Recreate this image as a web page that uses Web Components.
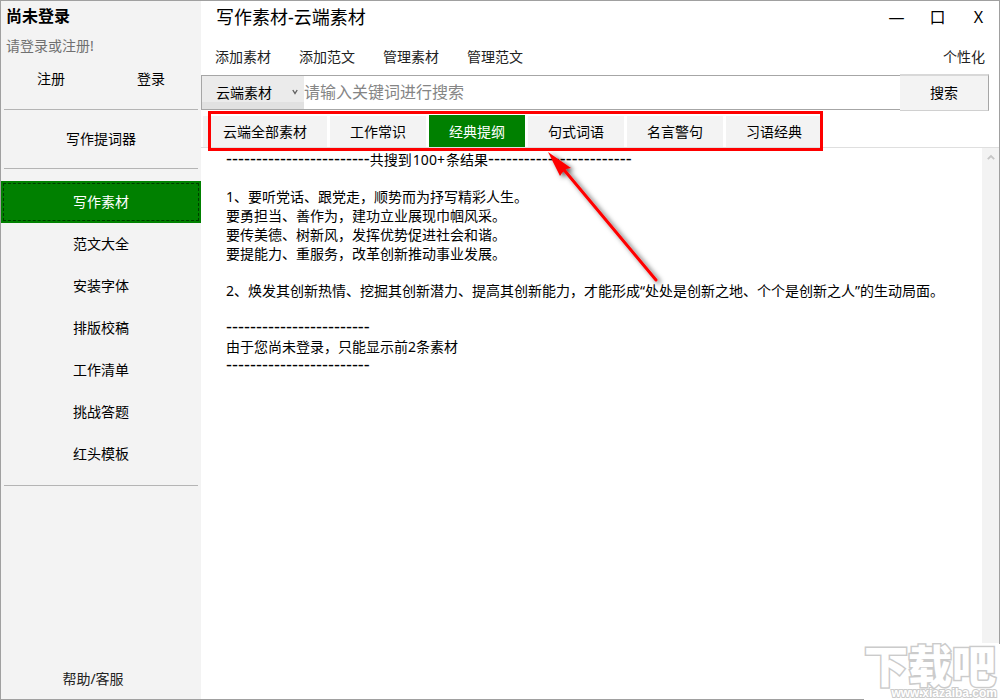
<!DOCTYPE html>
<html lang="zh-CN">
<head>
<meta charset="utf-8">
<title>写作素材-云端素材</title>
<style>
  html, body { margin: 0; }
  body {
    font: 14px/19px "Noto Sans", "Noto Sans CJK SC", sans-serif;
    color: #000;
    background: #fff;
  }
</style>
</head>
<body>
<app-window></app-window>

<script>
const define = (name, html, setup) => {
  const template = document.createElement('template');
  template.innerHTML = html.trim();
  customElements.define(name, class extends HTMLElement {
    connectedCallback() {
      if (this.shadowRoot) return;
      this.attachShadow({ mode: 'open' }).append(template.content.cloneNode(true));
      if (setup) setup(this, this.shadowRoot);
    }
  });
};

/* Flat button; variants: nav, tab, menu, caption */
define('flat-button', `
  <style>
    :host { display: flex; }
    button {
      flex: 1; margin: 0; border: 0; padding: 0 0 2px; background: none;
      font: inherit; color: inherit; white-space: nowrap; cursor: pointer;
    }
    :host([variant="nav"]) { height: 42px; }
    :host([variant="menu"]) button { padding: 0 14px 2px; color: #222; }
    :host([variant="tab"]) button { padding: 0 20px; background: #f3f3f3; }
    :host([variant="caption"]) button { width: 41px; padding: 0; font-size: 16px; }
    :host([selected]) button { background: #008000; color: #fff; }
    :host([variant="nav"][selected]) button { outline: 1px dashed #003c00; outline-offset: -3px; }
  </style>
  <button type="button"><slot></slot></button>`);

define('side-bar', `
  <style>
    :host { display: flex; flex-direction: column; background: #f3f3f3; }
    h2 { margin: 0; padding: 0 5px; font-size: 16px; line-height: 30px; }
    p { margin: 0; padding: 0 5px; line-height: 30px; color: #707070; }
    .account { display: grid; grid-template-columns: 1fr 1fr; height: 36px; }
    hr { margin: 0 3px; border: 0; height: 1px; background: #b4b4b4; flex: none; }
    .account + hr { margin-top: 12px; }
    .prompter { height: 58px; }
    nav { padding: 12px 0 10px; }
    .help { height: 40px; margin-top: auto; padding-right: 16px; color: #222; }
  </style>
  <h2>尚未登录</h2>
  <p>请登录或注册!</p>
  <div class="account"><flat-button>注册</flat-button><flat-button>登录</flat-button></div>
  <hr>
  <flat-button class="prompter">写作提词器</flat-button>
  <hr>
  <nav>
    <flat-button variant="nav" selected>写作素材</flat-button>
    <flat-button variant="nav">范文大全</flat-button>
    <flat-button variant="nav">安装字体</flat-button>
    <flat-button variant="nav">排版校稿</flat-button>
    <flat-button variant="nav">工作清单</flat-button>
    <flat-button variant="nav">挑战答题</flat-button>
    <flat-button variant="nav">红头模板</flat-button>
  </nav>
  <hr>
  <flat-button class="help">帮助/客服</flat-button>`);

define('title-bar', `
  <style>
    :host { display: flex; justify-content: space-between; height: 33px; }
    h1 { margin: 0; padding-left: 15px; font-size: 18px; font-weight: 400; line-height: 33px; }
    .buttons { display: flex; }
  </style>
  <h1>写作素材-云端素材</h1>
  <div class="buttons">
    <flat-button variant="caption">—</flat-button>
    <flat-button variant="caption">口</flat-button>
    <flat-button variant="caption">X</flat-button>
  </div>`);

define('menu-bar', `
  <style>
    :host { display: flex; height: 34px; margin-top: 6px; }
    .end { margin-left: auto; }
  </style>
  <flat-button variant="menu">添加素材</flat-button>
  <flat-button variant="menu">添加范文</flat-button>
  <flat-button variant="menu">管理素材</flat-button>
  <flat-button variant="menu">管理范文</flat-button>
  <flat-button variant="menu" class="end">个性化</flat-button>`);

define('search-bar', `
  <style>
    :host { display: block; margin-right: 10px; }
    form { display: flex; align-items: center; height: 37px; margin: 0; }
    .field {
      flex: 1; display: flex; box-sizing: border-box; height: 35px; min-width: 0;
      border: 1px solid #a6a6a6; border-right: 0; background: #fff;
    }
    .scope { display: grid; width: 102px; align-items: center; background: linear-gradient(#ebebeb 78%, #e1e1e1 78%); }
    .scope > * { grid-area: 1 / 1; }
    .scope svg { justify-self: end; margin: 0 6px 2px 0; pointer-events: none; }
    select {
      appearance: none; width: 100%; height: 100%; margin: 0; border: 0; border-radius: 0;
      padding: 0 24px 0 14px; background: none; font: inherit; color: inherit;
    }
    input {
      flex: 1; min-width: 0; border: 0; outline: 0; margin: 0; padding: 0;
      background: none; font: inherit; font-size: 16px; color: inherit;
    }
    input::placeholder { color: #858585; opacity: 1; }
    button {
      box-sizing: border-box; width: 89px; height: 37px; margin: 0; padding: 0 0 2px;
      border: 0 solid #a6a6a6; border-width: 2px 1px 1px 0;
      border-top-color: #d8d8d8; border-bottom-color: #d0d0d0;
      background: #f3f3f3; font: inherit; color: inherit;
    }
  </style>
  <form>
    <div class="field">
      <div class="scope">
        <select aria-label="搜索范围"><option>云端素材</option></select>
        <svg width="6" height="6" viewBox="0 0 6 6" aria-hidden="true"><path d="M.8 1 3 4.500 5.200 1" fill="none" stroke="#606060" stroke-width="1.400"/></svg>
      </div>
      <input type="text" aria-label="关键词" placeholder="请输入关键词进行搜索">
    </div>
    <button type="button">搜索</button>
  </form>`);

define('category-tabs', `
  <style>
    :host { display: block; position: relative; margin-top: 4px; border-bottom: 1px solid #dfdfdf; }
    .tabs { display: flex; gap: 3px; height: 32px; padding-left: 2px; }
    flat-button:not([selected]) { padding-top: 1px; }
  </style>
  <div class="tabs">
    <flat-button variant="tab">云端全部素材</flat-button>
    <flat-button variant="tab">工作常识</flat-button>
    <flat-button variant="tab" selected>经典提纲</flat-button>
    <flat-button variant="tab">句式词语</flat-button>
    <flat-button variant="tab">名言警句</flat-button>
    <flat-button variant="tab">习语经典</flat-button>
  </div>
  <call-out></call-out>`);

/* Red frame round the tabs with an arrow that points at them */
define('call-out', `
  <style>
    :host { position: absolute; z-index: 2; left: 7px; top: -4px; pointer-events: none; }
    .frame { box-sizing: border-box; width: 615px; height: 40px; border: 3px solid #fe0000; }
    svg { position: absolute; left: 332px; top: 33px; }
  </style>
  <div class="frame"></div>
  <svg width="130" height="150" viewBox="0 0 130 150" aria-hidden="true">
    <defs><filter id="shade" x="-20%" y="-20%" width="150%" height="150%">
      <feDropShadow dx="3" dy="2" stdDeviation="2.500" flood-color="#000" flood-opacity=".65"/>
    </filter></defs>
    <g filter="url(#shade)">
      <path d="M25 27 116 136" stroke="#fe0000" stroke-width="3" stroke-linecap="round"/>
      <path d="M8 8 31 24 26.500 25 22 29 20 32Z" fill="#fe0000"/>
    </g>
  </svg>`);

define('dash-rule', `<style>:host { font: 18px/1px "Liberation Sans", sans-serif; }</style>------------------------`);

define('result-view', `
  <style>
    :host { display: flex; flex: 1; }
    article { flex: 1; display: flex; flex-direction: column; gap: 18px; padding: 2px 20px 20px 25px; }
    p { margin: 0; line-height: 19px; }
    .count { margin: 0 1px; }
    .track { width: 17px; margin-bottom: 56px; background: #f3f3f3; display: flex; justify-content: center; }
    .track svg { margin-top: 6px; }
  </style>
  <article>
    <p><dash-rule></dash-rule>共搜到<span class="count">100+</span>条结果<dash-rule></dash-rule></p>
    <p>1、要听党话、跟党走，顺势而为抒写精彩人生。<br>要勇担当、善作为，建功立业展现巾帼风采。<br>要传美德、树新风，发挥优势促进社会和谐。<br>要提能力、重服务，改革创新推动事业发展。</p>
    <p>2、焕发其创新热情、挖掘其创新潜力、提高其创新能力，才能形成“处处是创新之地、个个是创新之人”的生动局面。</p>
    <p><dash-rule></dash-rule><br>由于您尚未登录，只能显示前2条素材<br><dash-rule></dash-rule></p>
  </article>
  <div class="track"><svg width="8" height="7" viewBox="0 0 8 7" aria-hidden="true"><path d="M.8 5.200 4 2 7.200 5.200" fill="none" stroke="#c6c6c6" stroke-width="1.800"/></svg></div>`);

define('site-mark', `
  <style>
    :host {
      position: absolute; right: 0; bottom: 0; z-index: 3; width: 136px; height: 56px;
      display: flex; flex-direction: column; justify-content: space-between;
      background: #fff; color: #fff; pointer-events: none;
    }
    div { white-space: nowrap; paint-order: stroke fill; }
    .name { font: 900 44px/40px "Noto Sans CJK SC", sans-serif; -webkit-text-stroke: 3px #cbcbcb; }
    .url {
      align-self: flex-end; padding-right: 3px;
      font: bold 12px/13px "Liberation Sans", sans-serif; -webkit-text-stroke: 2px #cbcbcb;
    }
  </style>
  <div class="name">下载吧</div>
  <div class="url">www.xiazaiba.com</div>`);

define('app-window', `
  <style>
    :host {
      display: grid; grid-template-columns: 200px 1fr; position: relative;
      box-sizing: border-box; min-height: 100vh; border: 1px solid #a0a0a0; background: #fff;
    }
    main { display: flex; flex-direction: column; min-width: 0; }
    site-mark { margin: -1px; }
  </style>
  <side-bar></side-bar>
  <main>
    <title-bar></title-bar>
    <menu-bar></menu-bar>
    <search-bar></search-bar>
    <category-tabs></category-tabs>
    <result-view></result-view>
  </main>
  <site-mark></site-mark>`);
</script>
</body>
</html>
